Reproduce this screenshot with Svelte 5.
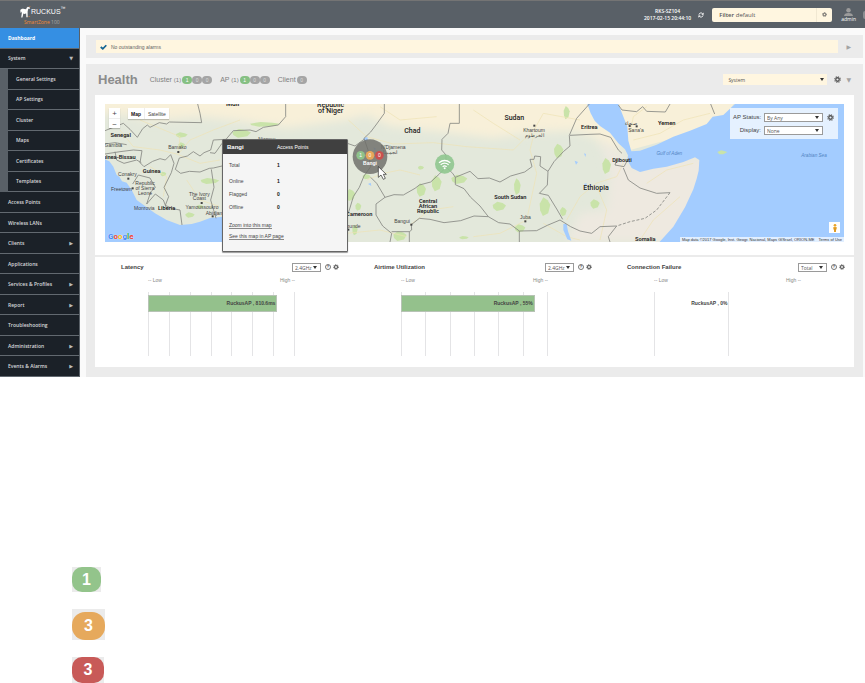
<script lang="ts">
  interface NavItem {
    label: string;
    sub?: boolean;
    active?: boolean;
    arrow?: string;
  }

  interface Chart {
    title: string;
    options: string[];
    cells: number;
    closed: boolean;
    width: number;
    label: string;
  }

  interface MapLabel {
    x: number;
    y: number;
    text: string;
    kind?: string;
  }

  const nav: NavItem[] = [
    { label: 'Dashboard', active: true },
    { label: 'System', arrow: '▼' },
    { label: 'General Settings', sub: true },
    { label: 'AP Settings', sub: true },
    { label: 'Cluster', sub: true },
    { label: 'Maps', sub: true },
    { label: 'Certificates', sub: true },
    { label: 'Templates', sub: true },
    { label: 'Access Points' },
    { label: 'Wireless LANs' },
    { label: 'Clients', arrow: '▶' },
    { label: 'Applications' },
    { label: 'Services & Profiles', arrow: '▶' },
    { label: 'Report', arrow: '▶' },
    { label: 'Troubleshooting' },
    { label: 'Administration', arrow: '▶' },
    { label: 'Events & Alarms', arrow: '▶' },
  ];

  const health = [
    { name: 'Cluster', total: '(1)', counts: [1, 0, 0] },
    { name: 'AP', total: '(1)', counts: [1, 0, 0] },
    { name: 'Client', total: '', counts: [0] },
  ];

  const charts: Chart[] = [
    { title: 'Latency', options: ['2.4GHz', '5GHz'], cells: 7, closed: true, width: 88, label: 'RuckusAP , 810.6ms' },
    { title: 'Airtime Utilization', options: ['2.4GHz', '5GHz'], cells: 6, closed: true, width: 91, label: 'RuckusAP , 55%' },
    { title: 'Connection Failure', options: ['Total', '2.4GHz'], cells: 2, closed: false, width: 0, label: 'RuckusAP , 0%' },
  ];

  const popupRows = [
    { label: 'Total', value: 1 },
    { label: 'Online', value: 1 },
    { label: 'Flagged', value: 0 },
    { label: 'Offline', value: 0 },
  ];

  // map units: three per screen pixel
  const mapLabels: MapLabel[] = [
    { x: 398, y: 19, text: 'Mali', kind: 'country' },
    { x: 692, y: 21, text: 'Republic', kind: 'country' },
    { x: 692, y: 40, text: 'of Niger', kind: 'country' },
    { x: 62, y: 111, text: 'Senegal', kind: 'bold' },
    { x: 40, y: 140, text: 'Gambia' },
    { x: 52, y: 178, text: 'Guinea-Bissau', kind: 'bold' },
    { x: 232, y: 148, text: 'Bamako' },
    { x: 155, y: 220, text: 'Guinea', kind: 'bold' },
    { x: 82, y: 229, text: 'Conakry' },
    { x: 135, y: 256, text: 'Republic' },
    { x: 135, y: 270, text: 'of Sierra' },
    { x: 135, y: 284, text: 'Leone' },
    { x: 64, y: 273, text: 'Freetown' },
    { x: 133, y: 331, text: 'Monrovia' },
    { x: 200, y: 331, text: 'Liberia', kind: 'bold' },
    { x: 298, y: 287, text: 'The Ivory' },
    { x: 298, y: 301, text: 'Coast' },
    { x: 306, y: 326, text: 'Yamoussoukro' },
    { x: 342, y: 344, text: 'Abidjan' },
    { x: 500, y: 124, text: 'Niamey' },
    { x: 937, y: 98, text: 'Chad', kind: 'country' },
    { x: 880, y: 148, text: "N'Djamena" },
    { x: 870, y: 162, text: 'انجمينا' },
    { x: 1243, y: 60, text: 'Sudan', kind: 'country' },
    { x: 1302, y: 95, text: 'Khartoum' },
    { x: 1302, y: 110, text: 'الخرطوم' },
    { x: 778, y: 348, text: 'Cameroon', kind: 'bold' },
    { x: 752, y: 384, text: 'Yaounde' },
    { x: 984, y: 308, text: 'Central', kind: 'bold' },
    { x: 984, y: 323, text: 'African', kind: 'bold' },
    { x: 984, y: 339, text: 'Republic', kind: 'bold' },
    { x: 906, y: 368, text: 'Bangui' },
    { x: 1231, y: 298, text: 'South Sudan', kind: 'bold' },
    { x: 1276, y: 358, text: 'Juba' },
    { x: 1468, y: 86, text: 'Eritrea', kind: 'bold' },
    { x: 1488, y: 269, text: 'Ethiopia', kind: 'country' },
    { x: 1592, y: 75, text: 'صنعاء' },
    { x: 1608, y: 97, text: "Sana'a" },
    { x: 1700, y: 74, text: 'Yemen', kind: 'bold' },
    { x: 1566, y: 185, text: 'Djibouti', kind: 'bold' },
    { x: 1636, y: 423, text: 'Somalia', kind: 'bold' },
    { x: 1708, y: 165, text: 'Gulf of Aden', kind: 'sea' },
    { x: 2142, y: 171, text: 'Arabian Sea', kind: 'sea' },
  ];

  const parks = [
    [245, 105, 18, 8], [245, 135, 10, 8], [330, 243, 28, 9], [270, 345, 14, 8], [495, 73, 45, 7],
    [425, 100, 28, 13], [190, 222, 9, 7], [300, 320, 10, 6], [800, 230, 12, 8], [752, 285, 14, 18],
    [775, 320, 9, 12], [964, 270, 14, 20], [1010, 250, 15, 24], [1078, 238, 24, 14], [963, 203, 9, 6],
    [1252, 260, 10, 25], [1198, 319, 20, 14], [1335, 320, 16, 28], [1376, 153, 14, 22], [1400, 38, 9, 20],
    [1520, 198, 13, 24], [1485, 312, 14, 14], [1260, 385, 16, 12], [900, 408, 20, 15], [1092, 413, 14, 5],
    [1390, 335, 10, 14], [765, 390, 8, 16],
  ];

  const borders = [
    'M15 92 45 80 70 70 90 88 112 112 128 86 142 75 150 82 178 68 200 72 208 66 305 68 300 40 293 12',
    'M557 12V50L535 75 490 82 468 95 450 90 400 92 378 118 340 120 332 150 312 158 300 168 280 155 262 168 238 174 226 208 242 220 268 214 300 216 328 205 340 204 366 198',
    'M15 162 60 155 100 150 126 152 120 188 132 200 158 184 180 176 196 180 212 164',
    'M15 132 45 128 80 134', 'M45 155 50 180 72 190 110 180 124 188',
    'M212 164 222 190 214 218 192 262 206 290 196 316 218 326 240 330 246 375',
    'M98 252 115 225 150 234 166 262 152 276 140 312', 'M140 312 166 282 190 300 200 326',
    'M334 208 342 262 332 300 348 355', 'M366 130 345 160 330 158',
    'M853 12V40L830 72 812 96 792 115 804 150 812 200 792 228 778 262 760 290 748 330 742 345',
    'M742 130 765 138 792 118', 'M812 232 830 250 855 292 882 284 910 285 945 265 958 255 992 246 1018 222 1035 205',
    'M1078 12V70H1050L1044 100 1026 118 1025 150 1038 165 1037 200 1058 220 1066 232',
    'M1066 232 1110 214 1134 236 1168 234 1200 246 1232 228 1274 216 1296 200 1290 178 1302 178 1304 168 1322 170 1320 198 1344 214 1342 255 1318 280 1345 286 1372 330 1388 358',
    'M1066 232 1066 254 1092 266 1112 292 1140 318 1165 350 1122 348 1082 362 1032 368 990 358 958 355 934 374 935 390 928 395V426',
    'M855 292 828 312 828 345 848 378 875 400 870 426', 'M875 395H928',
    'M1165 350 1196 368 1230 372 1258 393 1310 392 1342 376 1380 360 1412 380 1440 393 1475 400 1500 380 1550 378',
    'M1258 393V426', 'M1344 214 1362 185 1390 155 1410 138 1408 106 1430 55 1468 12',
    'M1410 106 1470 103 1500 102 1532 112 1555 150 1566 160', 'M1550 178 1545 195 1572 200 1584 178',
    'M1570 204 1585 240 1620 264 1670 280 1710 278', 'M1550 378 1525 410 1530 426',
    'M1555 15 1566 30 1610 35 1628 20 1640 34 1696 36 1710 12', 'M1832 12 1844 42',
  ];

  const roads = [
    'M60 90 100 140 180 150 230 162 300 190 360 180', 'M150 200 200 230 190 290', 'M235 162 270 120 340 90 420 60',
    'M260 240 300 300 360 320', 'M120 60 240 110 235 160', 'M745 60 800 110 880 132 1000 128 1100 140 1240 150 1300 90',
    'M800 240 850 220 900 210 960 225', 'M930 375 990 330 1060 320', 'M740 400 840 390 920 410',
    'M1302 90 1330 40 1440 60', 'M1302 100 1290 150 1310 220 1280 360', 'M1280 360 1200 400 1120 410',
    'M1488 250 1550 230 1570 190', 'M1488 250 1440 290 1400 360', 'M1488 255 1520 330 1500 420',
    'M1330 370 1400 410 1440 420', 'M1590 100 1600 50 1640 20', 'M1600 120 1680 100 1750 60 1830 40',
    'M1640 250 1700 210 1780 190', 'M1620 420 1660 360 1740 290', 'M840 20 900 60 1010 50', 'M1120 30 1180 70 1260 120',
  ];

  let system = $state('System');
  let apStatus = $state('By Any');
  let display = $state('None');
</script>

{#snippet gear()}
  <svg class="gear" viewBox="0 0 16 16" aria-hidden="true">
    <circle cx="8" cy="8" r="4" fill="none" stroke="currentColor" stroke-width="3" />
    <circle cx="8" cy="8" r="6.4" fill="none" stroke="currentColor" stroke-width="2.4" stroke-dasharray="2.6 2.43" />
  </svg>
{/snippet}

<header class="topbar">
  <a class="brand" href="#home">
    <span class="brand-name">
      <svg class="dog" viewBox="0 0 36 38" aria-hidden="true">
        <path fill="#fff" d="M1 13c2-4 7-6 13-4l6 1 2-5 4-3 7 3-1 3h-5l-2 9v19h-4l-1-13c-3 3-6 3-9 1l-3 13H4l2-15-2-5-2 6z" />
        <path fill="#e8833a" d="M28 1l5-1 2 3-5-1zM27 32h6v2h-6z" />
      </svg>
      RUCKUS<sup>™</sup>
    </span>
    <span class="product"><b>SmartZone</b> 100</span>
  </a>
  <div class="top-right">
    <div class="clock"><span>RKS-SZ104</span><span>2017-02-15 20:44:10</span></div>
    <button class="icon-btn" type="button" aria-label="Refresh">
      <svg class="refresh" viewBox="0 0 16 16" aria-hidden="true">
        <path d="M2.500 7a5.500 5.500 0 0 1 10-2M13.500 9a5.500 5.500 0 0 1-10 2" fill="none" stroke="#fff" stroke-width="2.500" />
        <path d="M15 1v6H9zM1 15V9h6z" fill="#fff" />
      </svg>
    </button>
    <div class="filter">
      <span class="filter-text"><b>Filter</b> default</span>
      <button class="filter-btn" type="button" aria-label="Filter settings">{@render gear()}</button>
    </div>
    <a class="user" href="#admin">
      <svg viewBox="0 0 20 18" aria-hidden="true"><circle cx="10" cy="5" r="5" /><path d="M0 18c0-5 4-7 10-7s10 2 10 7z" /></svg>
      admin
    </a>
    <span class="edge"></span>
  </div>
</header>

<div class="shell">
  <nav class="sidebar">
    {#each nav as item}
      <a href="#{item.label}" class:sub={item.sub} class:active={item.active}>
        <span>{item.label}</span>
        {#if item.arrow}<span class="arrow">{item.arrow}</span>{/if}
      </a>
    {/each}
  </nav>

  <main>
    <section class="alarms">
      <div class="alarm-msg">
        <svg viewBox="0 0 20 16" aria-hidden="true"><path d="M2 8l6 5L18 3" fill="none" stroke="#146594" stroke-width="5" /></svg>
        No outstanding alarms
      </div>
      <button class="icon-btn toggle" type="button" aria-label="Expand alarms">▶</button>
    </section>

    <section class="health">
      <div class="health-head">
        <h1>Health</h1>
        {#each health as group}
          <div class="group">
            <span>{group.name} <small>{group.total}</small></span>
            <span class="pills">
              {#each group.counts as count}
                <span class="pill" class:ok={count > 0}>{count}</span>
              {/each}
            </span>
          </div>
        {/each}
        <span class="select system">
          <select bind:value={system} aria-label="Scope"><option>System</option></select>
        </span>
        <button class="icon-btn" type="button" aria-label="Settings">{@render gear()}</button>
        <button class="icon-btn toggle" type="button" aria-label="Collapse health">▼</button>
      </div>

      <div class="card map-card">
        <div class="map">
          <svg class="world" viewBox="15 12 2217 414" preserveAspectRatio="xMidYMid slice" role="img" aria-label="Map">
            <defs>
              <filter id="soft"><feGaussianBlur stdDeviation="14" /></filter>
            </defs>
            <rect x="-400" y="-400" width="3200" height="1200" fill="#e3e8db" />
            <path filter="url(#soft)" fill="#f8f0d9" d="M-20-20V38L90 45 150 62 300 50 420 62 560 84 740 60 800 45 870 78 1000 92 1060 100 1180 115 1300 95 1420 92 1480 110 1560 170V-20z" />
            <path filter="url(#soft)" fill="#eee9e0" d="M1400 426 1440 340 1520 330 1530 220 1500 110 1600 200 1840 160 1850 426z" />
            <path fill="#f8f0d9" d="M1555 0 1590 150 1850 80 1910 0z" />
            {#each parks as [x, y, rx, ry]}
              <path fill="#c9e3a9" d="M{x - rx} {y - ry * 0.3}l{rx * 0.7} {-ry * 0.7} {rx * 0.8} {ry * 0.3} {rx * 0.5} {ry * 0.5} {-rx * 0.4} {ry * 0.9} {-rx} {ry * 0.3} {-rx * 0.5} {-ry * 0.6}z" />
            {/each}
            {#each roads as d}<path class="road" {d} />{/each}
            <g fill="#a3ccff">
              <path d="M0 172 28 184 40 200 50 225 58 230 66 244 80 248 95 270 110 300 135 318 165 340 200 360 240 375 275 372 300 365 330 354 370 350 720 360V440H0z" />
              <path d="M1462 12 1472 40 1484 62 1500 78 1530 98 1555 130 1575 148 1584 166 1582 180 1595 204 1620 216 1660 206 1700 200 1750 186 1785 172 1798 180 1796 212 1790 236 1780 268 1755 322 1720 380 1675 430H2700V-300H1920L1905 12 1870 45 1838 50 1820 72 1770 92 1720 110 1670 134 1620 152 1594 154 1585 122 1582 80 1566 40 1555 12z" />
              <path d="M1390 372l10 0 4 22 10 28-12-4-12-28zM790 115l12-4 2 10-10 3zM820 142l8 4-4 5zM1424 182l10 4-6 8zM1452 160l6 2-2 9zM1452 252l8-2-2 10zM804 252l8-4 2 10z" />
            </g>
            <path fill="#c9e3a9" d="M1852 156l12-5 18 5-12 7h-12z" />
            {#each borders as d}<path class="border" {d} />{/each}
            <path class="border dashed" d="M1710 278 1670 330 1635 355 1590 365 1550 378" />
            <g fill="#444">
              {#each [[235, 156], [85, 236], [98, 265], [305, 309], [338, 349], [1303, 77], [1276, 364], [934, 374], [745, 389], [1589, 78], [1610, 79]] as [x, y]}
                <rect x={x - 3} y={y - 3} width="6" height="6" />
              {/each}
            </g>
            {#each mapLabels as label}
              <text class={label.kind ?? 'town'} x={label.x} y={label.y}>{label.text}</text>
            {/each}

            <circle cx="810" cy="170" r="52" fill="#6d6c68" opacity=".82" />
            {#each [['#8fc28a', 1], ['#e6a65a', 0], ['#c9504e', 0]] as [color, count], i}
              <circle cx={782 + i * 28} cy="166" r="13" fill={color} />
              <text class="mark" x={782 + i * 28} y="172">{count}</text>
            {/each}
            <text class="mark bold-mark" x="810" y="196">Bangi</text>

            <circle cx="1034" cy="192" r="29" fill="#8fc68f" opacity=".9" />
            <path d="M1017 188q17-13 34 0M1022 194q12-9 24 0M1028 200q6-5 12 0" fill="none" stroke="#fff" stroke-width="4" />
            <circle cx="1034" cy="205" r="3" fill="#fff" />
            <path d="M835 200v32l8-7 7 13 6-3-6-12h9z" fill="#fff" stroke="#222" stroke-width="2" />
          </svg>

          <div class="zoom">
            <button type="button" aria-label="Zoom in">+</button>
            <button type="button" aria-label="Zoom out">−</button>
          </div>
          <div class="map-type">
            <button type="button" class="on">Map</button>
            <button type="button">Satellite</button>
          </div>

          <div class="map-filter">
            <label for="ap-status">AP Status:</label>
            <span class="select boxed">
              <select id="ap-status" bind:value={apStatus}><option>By Any</option></select>
            </span>
            <button class="icon-btn" type="button" aria-label="Map settings">{@render gear()}</button>
            <label for="display">Display:</label>
            <span class="select boxed">
              <select id="display" bind:value={display}><option>None</option></select>
            </span>
          </div>

          <div class="google" aria-label="Google"><i>G</i><i>o</i><i>o</i><i>g</i><i>l</i><i>e</i></div>
          <button class="pegman" type="button" aria-label="Street View">
            <svg viewBox="0 0 12 24" aria-hidden="true"><circle cx="6" cy="4" r="4" fill="#e9a52c" /><path d="M1 9h10v7l-2 1v7H3v-7l-2-1z" fill="#e9a52c" /><path d="M6 12v11" stroke="#a86b14" /></svg>
          </button>
          <div class="credits">
            <span>Map data ©2017 Google, Inst. Geogr. Nacional, Maps GISrael, ORION-ME</span>
            <a href="#terms">Terms of Use</a>
          </div>

          <div class="popup">
            <div class="popup-head"><b>Bangi</b><span>Access Points</span></div>
            <dl>
              {#each popupRows as row}
                <div><dt>{row.label}</dt><dd>{row.value}</dd></div>
              {/each}
            </dl>
            <a href="#zoom">Zoom into this map</a>
            <a href="#ap">See this map in AP page</a>
          </div>
        </div>
      </div>

      <div class="card charts">
        {#each charts as chart}
          <article class="chart">
            <div class="chart-head">
              <h2>{chart.title}</h2>
              <span class="select boxed small">
                <select aria-label="{chart.title} band">
                  {#each chart.options as option}<option>{option}</option>{/each}
                </select>
              </span>
              <button class="icon-btn help" type="button" aria-label="Help">?</button>
              <button class="icon-btn small-gear" type="button" aria-label="{chart.title} settings">{@render gear()}</button>
            </div>
            <div class="scale"><span>-- Low</span><span>High --</span></div>
            <div class="plot">
              <div class="lines" class:closed={chart.closed}>
                {#each Array(chart.cells) as _}<span></span>{/each}
              </div>
              {#if chart.width}
                <div class="bar" style="width: {chart.width}%">{chart.label}</div>
              {:else}
                <div class="bar-label">{chart.label}</div>
              {/if}
            </div>
          </article>
        {/each}
      </div>
    </section>
  </main>
</div>

<div class="legend">
  <div class="swatch"><span class="tile green">1</span></div>
  <div class="swatch"><span class="tile orange">3</span></div>
  <div class="swatch"><span class="tile red">3</span></div>
</div>

<style>
  :global(body) {
    background: #fff;
    overflow: hidden;
  }

  :global(#app) {
    font: 6px/8px 'Open Sans', 'Liberation Sans', sans-serif;
    color: #444;
  }

  a {
    color: inherit;
    text-decoration: none;
  }

  button,
  select {
    margin: 0;
    padding: 0;
    border: 0;
    background: none;
    color: inherit;
    font: inherit;
  }

  h1,
  h2,
  dl,
  dd {
    margin: 0;
  }

  .icon-btn {
    display: grid;
    place-items: center;
    flex: none;
  }

  .gear {
    display: block;
    width: 7px;
    height: 7px;
    color: #555;
  }

  .topbar {
    display: flex;
    justify-content: space-between;
    box-sizing: border-box;
    height: 28px;
    padding-left: 20px;
    border-top: 1px solid #747474;
    background: #596067;
    color: #fff;
  }

  .brand {
    display: flex;
    flex-direction: column;
    padding-top: 4px;
  }

  .brand-name {
    display: flex;
    align-items: center;
    height: 14px;
    font: 7px/14px 'Liberation Sans', sans-serif;
  }

  .brand-name sup {
    align-self: flex-start;
    font-size: 5px;
    line-height: 7px;
  }

  .dog {
    width: 11px;
    height: 12px;
  }

  .product {
    padding-left: 4px;
    font-size: 5px;
    line-height: 7px;
    color: #aaa;
  }

  .product b {
    font-weight: 400;
    color: #f08a35;
  }

  .top-right {
    display: flex;
    align-items: center;
  }

  .clock {
    display: flex;
    flex-direction: column;
    align-items: center;
    margin-right: 7px;
    font-size: 5px;
    font-weight: 600;
    line-height: 7px;
  }

  .refresh {
    width: 6px;
    height: 6px;
  }

  .filter {
    display: flex;
    align-items: center;
    width: 120px;
    height: 14px;
    margin: 0 9px 0 8px;
    border-radius: 2px;
    background: #fff6e0;
    color: #555;
  }

  .filter-text {
    flex: 1;
    padding-left: 7px;
  }

  .filter-text b {
    font-weight: 600;
  }

  .filter-btn {
    display: grid;
    place-items: center;
    width: 16px;
    height: 14px;
    border-left: 1px solid #f1e8d2;
  }

  .filter-btn .gear {
    width: 5px;
    height: 5px;
  }

  .user {
    display: flex;
    flex-direction: column;
    align-items: center;
    padding-top: 2px;
    font-size: 5px;
    line-height: 7px;
  }

  .user svg {
    width: 9px;
    height: 8px;
    fill: #9b9b9b;
  }

  .edge {
    width: 2px;
    height: 8px;
    margin-left: 7px;
    border-radius: 4px 0 0 4px;
    background: #8a8d91;
  }

  .shell {
    display: grid;
    grid-template-columns: 80px 1fr;
  }

  .sidebar {
    display: grid;
    grid-auto-rows: 1fr;
    background: #596067;
    color: #d8dadd;
  }

  .sidebar a {
    display: flex;
    align-items: center;
    justify-content: space-between;
    padding: 0 6px 0 8px;
    border-right: 1px solid #596067;
    border-bottom: 1px solid #626970;
    background: #1b2128;
    font-size: 5px;
    font-weight: 600;
  }

  .sidebar a.sub {
    margin-left: 8px;
  }

  .sidebar a.active {
    background: #358fe3;
    color: #fff;
    font-weight: 700;
  }

  .arrow {
    font: 5px/8px 'DejaVu Sans', sans-serif;
    color: #bbb;
  }

  main {
    padding: 7px 2px 0 6px;
    background: #fafafa;
  }

  .alarms {
    display: flex;
    align-items: center;
    gap: 8px;
    padding: 5px 12px 5px 10px;
    background: #ebebeb;
  }

  .alarm-msg {
    display: flex;
    flex: 1;
    align-items: center;
    gap: 4px;
    height: 13px;
    padding-left: 4px;
    background: #fff6e0;
    color: #666;
    font: 5px/8px 'Liberation Sans', sans-serif;
  }

  .alarm-msg svg {
    width: 7px;
    height: 6px;
  }

  .toggle {
    color: #a3a3a3;
    font: 6px/8px 'DejaVu Sans', sans-serif;
  }

  .health {
    margin-top: 6px;
    padding: 0 9px 10px;
    background: #ebebeb;
  }

  .health-head {
    display: flex;
    align-items: center;
    height: 31px;
    padding: 0 3px;
    color: #808080;
    font: 7px/10px 'Liberation Sans', sans-serif;
  }

  h1 {
    margin-right: 12px;
    color: #8c8c8c;
    font: 700 13px/16px 'Liberation Sans', sans-serif;
  }

  .group {
    display: flex;
    gap: 1px;
    margin-right: 8px;
  }

  .group small {
    font-size: 6px;
  }

  .pills {
    display: flex;
    align-items: center;
  }

  .pill {
    width: 10px;
    height: 8px;
    border-radius: 4px;
    background: #a5a5a5;
    color: #ddd;
    font-size: 5px;
    line-height: 8px;
    text-align: center;
  }

  .pill.ok {
    background: #86c083;
    color: #fff;
  }

  .select {
    display: grid;
    align-items: center;
  }

  .select select,
  .select::after {
    grid-area: 1 / 1;
  }

  .select select {
    appearance: none;
    width: 100%;
    height: 100%;
    padding-left: 2px;
    font: 5px/8px 'Open Sans', sans-serif;
    color: #555;
  }

  .select::after {
    content: '';
    justify-self: end;
    margin-right: 3px;
    border: 2px solid transparent;
    border-top: 3px solid #333;
    border-bottom: 0;
    pointer-events: none;
  }

  .system {
    width: 104px;
    height: 11px;
    margin: 0 7px 0 auto;
    background: #fff6e0;
  }

  .system select {
    padding-left: 5px;
  }

  .health-head .toggle {
    margin-left: 5px;
  }

  .boxed {
    height: 9px;
    box-sizing: border-box;
    border: 1px solid #9a9a9a;
    background: #fff;
  }

  .card {
    background: #fff;
  }

  .map-card {
    padding: 9px 10px 13px;
  }

  .map {
    position: relative;
    height: 138px;
  }

  .world {
    display: block;
    width: 100%;
    height: 138px;
  }

  .world text {
    font: 15px 'Liberation Sans', sans-serif;
    text-anchor: middle;
    fill: #444;
  }

  .world .country {
    font: 500 21px Roboto, sans-serif;
    fill: #222;
  }

  .world .bold {
    font: 600 17px Roboto, sans-serif;
    fill: #222;
  }

  .world .sea {
    font-style: italic;
    font-size: 14px;
    fill: #5285c4;
  }

  .world .mark {
    font-size: 15px;
    fill: #fff;
  }

  .world .bold-mark {
    font-weight: 700;
  }

  .border {
    fill: none;
    stroke: #858782;
    stroke-width: 2.5;
  }

  .dashed {
    stroke-dasharray: 9 5;
  }

  .road {
    fill: none;
    stroke: #efe3b4;
    stroke-width: 2;
  }

  .zoom,
  .map-type,
  .map-filter,
  .google,
  .pegman,
  .credits,
  .popup {
    position: absolute;
  }

  .zoom {
    top: 4px;
    left: 4px;
    display: grid;
    width: 11px;
    background: #fff;
    box-shadow: 0 1px 1px #0003;
  }

  .zoom button {
    height: 10px;
    font-size: 8px;
  }

  .zoom button + button {
    border-top: 1px solid #eee;
  }

  .map-type {
    top: 4px;
    left: 23px;
    display: flex;
    height: 11px;
    background: #fff;
    box-shadow: 0 1px 1px #0003;
    font: 5px/8px 'Liberation Sans', sans-serif;
  }

  .map-type button {
    padding: 0 3px;
  }

  .map-type .on {
    border-right: 1px solid #eee;
    font-weight: 700;
    color: #111;
  }

  .map-filter {
    top: 4px;
    right: 6px;
    display: grid;
    grid-template-columns: 28px 59px 8px;
    gap: 3px;
    align-items: center;
    box-sizing: border-box;
    width: 108px;
    height: 31px;
    padding: 4px 3px;
    background: #ffffffb8;
    text-align: right;
    white-space: nowrap;
  }

  .map-filter label {
    font: 6px/9px 'Liberation Sans', sans-serif;
  }

  .google {
    left: 3px;
    bottom: 0;
    font: 700 8px/10px Roboto, 'Liberation Sans', sans-serif;
    color: #4285f4;
    text-shadow: 0 0 1px #fff;
  }

  .google i {
    font-style: normal;
  }

  .google i:nth-child(2),
  .google i:nth-child(6) {
    color: #ea4335;
  }

  .google i:nth-child(3) {
    color: #fbbc05;
  }

  .google i:nth-child(5) {
    color: #34a853;
  }

  .pegman {
    right: 4px;
    bottom: 9px;
    display: grid;
    place-items: center;
    width: 11px;
    height: 11px;
    background: #fff;
  }

  .pegman svg {
    width: 4px;
    height: 8px;
  }

  .credits {
    right: 0;
    bottom: 0;
    display: flex;
    gap: 4px;
    padding: 0 2px;
    background: #ffffffb0;
    font: 4px/5px 'Liberation Sans', sans-serif;
    color: #333;
  }

  .popup {
    top: 35px;
    left: 117px;
    box-sizing: border-box;
    width: 126px;
    height: 113px;
    border: 1px solid #666;
    border-radius: 1px;
    background: #f5f5f5;
    box-shadow: 0 1px 1px #0006;
    font: 5px/8px 'Liberation Sans', sans-serif;
  }

  .popup-head,
  .popup dl div {
    display: grid;
    grid-template-columns: 48px 1fr;
    align-items: center;
    padding-left: 6px;
  }

  .popup-head {
    grid-template-columns: 50px 1fr;
    height: 14px;
    padding-left: 4px;
    background: #404040;
    color: #fff;
  }

  .popup-head b {
    font-size: 6px;
  }

  .popup dl {
    padding: 4px 0 9px;
  }

  .popup dl div {
    height: 13px;
  }

  .popup dl div:first-child {
    margin-bottom: 3px;
  }

  .popup dd {
    color: #111;
    font-weight: 700;
  }

  .popup > a {
    display: block;
    width: fit-content;
    margin: 0 0 4px 6px;
    border-bottom: 1px solid #888;
    line-height: 6px;
  }

  .charts {
    display: grid;
    grid-template-columns: repeat(3, 1fr);
    margin-top: 2px;
    padding-bottom: 11px;
  }

  .chart-head {
    display: flex;
    align-items: center;
    height: 20px;
    padding: 0 9px 0 26px;
  }

  h2 {
    flex: 1;
    font: 700 6px/8px 'Liberation Sans', sans-serif;
  }

  .small {
    width: 29px;
    margin-right: 4px;
  }

  .help {
    width: 6px;
    height: 6px;
    margin-right: 2px;
    border: 1px solid #777;
    border-radius: 50%;
    font-size: 4px;
    line-height: 4px;
    font-weight: 700;
  }

  .small-gear .gear {
    width: 6px;
    height: 6px;
  }

  .scale {
    display: flex;
    justify-content: space-between;
    margin: 0 53px;
    color: #888;
    font: 5px/7px 'Liberation Sans', sans-serif;
  }

  .plot {
    display: grid;
    grid-template-rows: 3px 17px 44px;
    margin: 8px 53px 0;
  }

  .lines {
    grid-area: 1 / 1 / 4 / 2;
    display: flex;
  }

  .lines span {
    flex: 1;
    border-left: 1px solid #e4e4e6;
  }

  .lines.closed {
    border-right: 1px solid #e4e4e6;
  }

  .bar,
  .bar-label {
    grid-area: 2 / 1;
    box-sizing: border-box;
    text-align: right;
    font: 700 5px/15px 'Liberation Sans', sans-serif;
  }

  .bar {
    padding-right: 1px;
    border: 1px solid #b7c3b5;
    background: #94c18c;
  }

  .bar-label {
    width: 50%;
    padding-top: 1px;
  }

  .legend {
    display: flex;
    flex-direction: column;
    align-items: flex-start;
    gap: 17px;
    padding: 190px 0 0 72px;
  }

  .swatch {
    background: #ebebeb;
  }

  .tile {
    display: block;
    width: 32px;
    height: 26px;
    border-radius: 10px;
    color: #fff;
    font: 700 16px/26px 'Liberation Sans', sans-serif;
    text-align: center;
  }

  .green {
    width: 29px;
    height: 25px;
    background: #93c48b;
    line-height: 25px;
  }

  .orange {
    width: 33px;
    height: 28px;
    margin-top: 3px;
    border-radius: 13px;
    background: #e6a95c;
    line-height: 28px;
  }

  .red {
    background: #c85a58;
  }
</style>
